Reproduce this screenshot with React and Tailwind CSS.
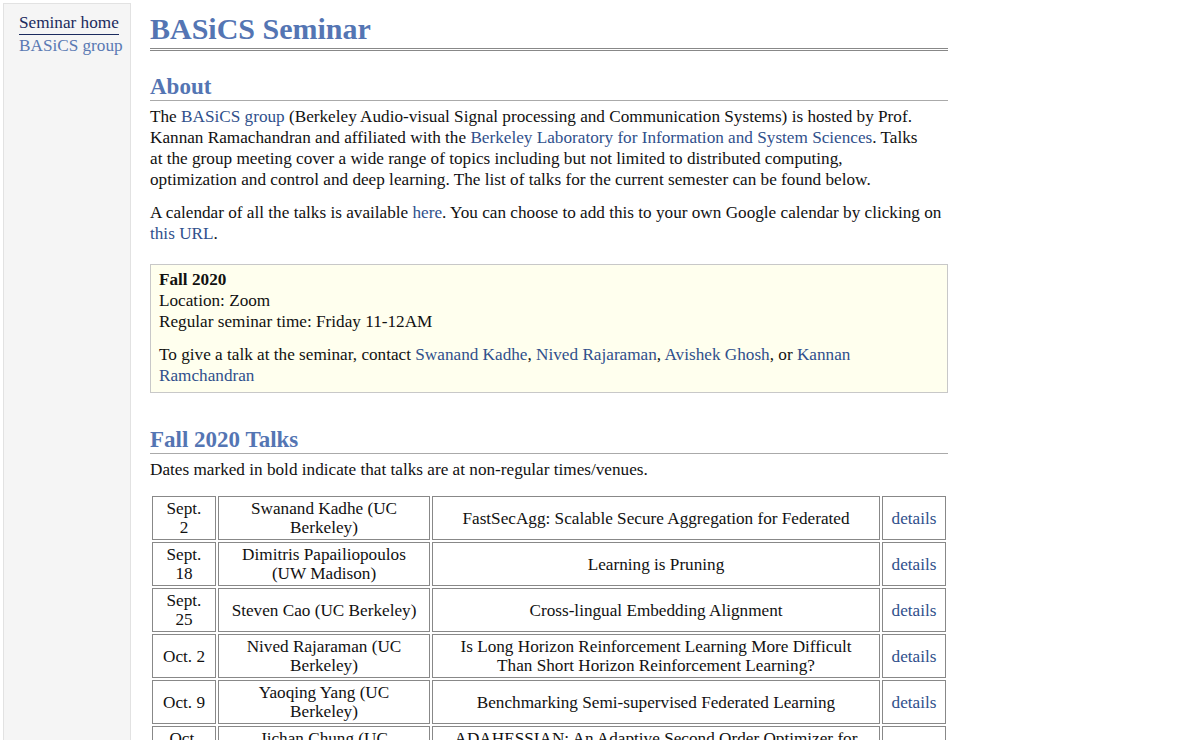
import React from "react";

const talks = [
  { date: ["Sept.", "2"], speaker: ["Swanand Kadhe (UC", "Berkeley)"], title: ["FastSecAgg: Scalable Secure Aggregation for Federated"] },
  { date: ["Sept.", "18"], speaker: ["Dimitris Papailiopoulos", "(UW Madison)"], title: ["Learning is Pruning"] },
  { date: ["Sept.", "25"], speaker: ["Steven Cao (UC Berkeley)"], title: ["Cross-lingual Embedding Alignment"] },
  { date: ["Oct. 2"], speaker: ["Nived Rajaraman (UC", "Berkeley)"], title: ["Is Long Horizon Reinforcement Learning More Difficult", "Than Short Horizon Reinforcement Learning?"] },
  { date: ["Oct. 9"], speaker: ["Yaoqing Yang (UC", "Berkeley)"], title: ["Benchmarking Semi-supervised Federated Learning"] },
  { date: ["Oct.", "16"], speaker: ["Jichan Chung (UC", "Berkeley)"], title: ["ADAHESSIAN: An Adaptive Second Order Optimizer for", "Machine Learning"] },
];

const Lines = ({ lines }) =>
  lines.map((l, i) => (
    <React.Fragment key={i}>
      {i > 0 && <br />}
      {l}
    </React.Fragment>
  ));

const A = ({ children }) => <a className="text-[#30508c]">{children}</a>;

export default function App() {
  return (
    <div className="flex items-stretch min-h-[740px] bg-white text-[#111] font-['Liberation_Serif',serif] text-[17.2px] leading-[21px]">
      {/* Sidebar */}
      <div className="mt-[3px] ml-[3px] w-[128px] shrink-0 bg-[#f5f5f5] border border-[#e2e2e2] px-[15px] pt-[8px] whitespace-nowrap">
        <a className="block w-max text-[#1b2b5e] border-b border-[#1b2b5e] leading-[22px]">Seminar home</a>
        <a className="block text-[#5a79b3] leading-[22px]">BASiCS group</a>
      </div>

      {/* Main */}
      <div className="ml-[19px] w-[798px] shrink-0 pb-10">
        <h1 className="mt-[12px] pb-[2px] text-[30px] leading-[34px] font-bold text-[#5475b3] border-b-[3px] border-double border-[#888]">
          BASiCS Seminar
        </h1>

        <h2 className="mt-[23px] text-[23px] leading-[26px] font-bold text-[#5475b3] border-b border-[#aaa]">About</h2>
        <p className="mt-[5px]">
          The <A>BASiCS group</A> (Berkeley Audio-visual Signal processing and Communication Systems) is hosted by Prof.
          <br />
          Kannan Ramachandran and affiliated with the <A>Berkeley Laboratory for Information and System Sciences</A>. Talks
          <br />
          at the group meeting cover a wide range of topics including but not limited to distributed computing,
          <br />
          optimization and control and deep learning. The list of talks for the current semester can be found below.
        </p>
        <p className="mt-[12px]">
          A calendar of all the talks is available <A>here</A>. You can choose to add this to your own Google calendar by clicking on
          <br />
          <A>this URL</A>.
        </p>

        <div className="mt-[20px] bg-[#ffffee] border border-[#c8c8c8] px-[8px] pt-[4px] pb-[6px]">
          <div className="font-bold">Fall 2020</div>
          <div>Location: Zoom</div>
          <div>Regular seminar time: Friday 11-12AM</div>
          <p className="mt-[12px]">
            To give a talk at the seminar, contact <A>Swanand Kadhe</A>, <A>Nived Rajaraman</A>, <A>Avishek Ghosh</A>, or <A>Kannan</A>
            <br />
            <A>Ramchandran</A>
          </p>
        </div>

        <h2 className="mt-[34px] text-[23px] leading-[26px] font-bold text-[#5475b3] border-b border-[#aaa]">Fall 2020 Talks</h2>
        <p className="mt-[5px]">Dates marked in bold indicate that talks are at non-regular times/venues.</p>

        <table className="mt-[14px] w-[798px] table-fixed border-separate border-spacing-[2px] text-center leading-[19px]">
          <colgroup>
            <col className="w-[64px]" />
            <col className="w-[212px]" />
            <col className="w-[448px]" />
            <col className="w-[64px]" />
          </colgroup>
          <tbody>
            {talks.map((t, i) => (
              <tr key={i} className="h-[44px]">
                <td className="border border-[#888] px-[4px] py-[2px] align-middle">
                  <Lines lines={t.date} />
                </td>
                <td className="border border-[#888] px-[4px] py-[2px] align-middle">
                  <Lines lines={t.speaker} />
                </td>
                <td className="border border-[#888] px-[4px] py-[2px] align-middle">
                  <Lines lines={t.title} />
                </td>
                <td className="border border-[#888] px-[4px] py-[2px] align-middle">
                  <A>details</A>
                </td>
              </tr>
            ))}
          </tbody>
        </table>
      </div>
    </div>
  );
}
